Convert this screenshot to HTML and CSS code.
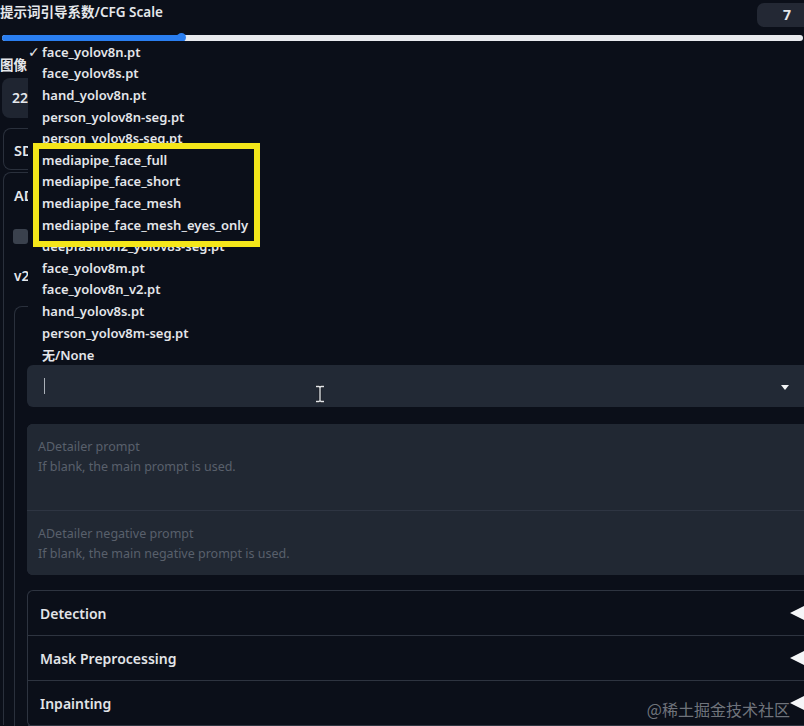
FILE: index.html
```html
<!DOCTYPE html>
<html lang="zh-CN">
<head>
    <meta charset="UTF-8">
    <meta name="viewport" content="width=device-width, initial-scale=1.0">
    <title>ADetailer</title>
    <link rel="stylesheet" href="styles.css">
</head>
<body>
    <div class="page">
        <!-- CFG scale slider -->
        <div class="cfg">
            <div class="cfg-head">
                <span class="label">提示词引导系数/CFG Scale</span>
                <div class="num-box">7</div>
            </div>
            <div class="slider">
                <div class="fill"></div>
                <div class="thumb"></div>
            </div>
        </div>

        <div class="size">
            <div class="label">图像</div>
            <div class="num-input">22</div>
        </div>

        <div class="block sd">
            <div class="block-title">SD</div>
        </div>

        <div class="block ad">
            <div class="block-title">AD</div>
            <div class="check"><span class="box"></span></div>
            <div class="ver">v2</div>

            <div class="inner">
                <div class="select">
                    <span class="caret"></span>
                    <span class="arrow"></span>
                </div>

                <div class="prompts">
                    <div class="prompt tall">
                        <p>ADetailer prompt</p>
                        <p>If blank, the main prompt is used.</p>
                    </div>
                    <div class="prompt">
                        <p>ADetailer negative prompt</p>
                        <p>If blank, the main negative prompt is used.</p>
                    </div>
                </div>

                <div class="accordions">
                    <div class="acc-row"><span>Detection</span><span class="tri"></span></div>
                    <div class="acc-row"><span>Mask Preprocessing</span><span class="tri"></span></div>
                    <div class="acc-row"><span>Inpainting</span><span class="tri"></span></div>
                </div>
            </div>
        </div>

        <!-- Open dropdown menu -->
        <ul class="menu">
            <li><span class="tick">✓</span>face_yolov8n.pt</li>
            <li><span class="tick"></span>face_yolov8s.pt</li>
            <li><span class="tick"></span>hand_yolov8n.pt</li>
            <li><span class="tick"></span>person_yolov8n-seg.pt</li>
            <li><span class="tick"></span>person_yolov8s-seg.pt</li>
            <li><span class="tick"></span>mediapipe_face_full</li>
            <li><span class="tick"></span>mediapipe_face_short</li>
            <li><span class="tick"></span>mediapipe_face_mesh</li>
            <li><span class="tick"></span>mediapipe_face_mesh_eyes_only</li>
            <li><span class="tick"></span>deepfashion2_yolov8s-seg.pt</li>
            <li><span class="tick"></span>face_yolov8m.pt</li>
            <li><span class="tick"></span>face_yolov8n_v2.pt</li>
            <li><span class="tick"></span>hand_yolov8s.pt</li>
            <li><span class="tick"></span>person_yolov8m-seg.pt</li>
            <li><span class="tick"></span>无/None</li>
        </ul>

        <div class="highlight"></div>

        <svg class="ibeam" width="10" height="18" viewBox="0 0 10 18">
            <path d="M1 1.5h3l1 1 1-1h3M5 2.5v13M1 16.5h3l1-1 1 1h3" fill="none" stroke="#1a1d24" stroke-width="3"/>
            <path d="M1 1.5h3l1 1 1-1h3M5 2.5v13M1 16.5h3l1-1 1 1h3" fill="none" stroke="#e3e6ea" stroke-width="1.3"/>
        </svg>

        <div class="watermark">@稀土掘金技术社区</div>
    </div>
</body>
</html>
```

FILE: styles.css
```css
/* General */
html, body {
    margin: 0;
    padding: 0;
    background: #0b0f19;
    overflow: hidden;
}

body {
    font-family: 'Noto Sans', 'Noto Sans CJK SC', sans-serif;
    color: #e5e7eb;
    width: 804px;
    height: 726px;
}

.page {
    position: relative;
    width: 812px;
    height: 726px;
    overflow: hidden;
}

.label {
    font-size: 13.5px;
    font-weight: 600;
    line-height: 20px;
    color: #e5e7eb;
}

/* CFG slider */
.cfg {
    padding-top: 2px;
}

.cfg-head {
    display: flex;
    justify-content: space-between;
    align-items: flex-start;
    height: 26px;
}

.num-box {
    margin-top: 1px;
    width: 34px;
    height: 24px;
    padding-right: 21px;
    border-radius: 7px;
    background: #232834;
    font-size: 14px;
    font-weight: 700;
    line-height: 24px;
    text-align: right;
}

.slider {
    position: relative;
    margin: 7px 9px 0 2px;
    height: 6px;
    border-radius: 3px;
    background: #e8eaee;
}

.slider .fill {
    width: 180px;
    height: 100%;
    border-radius: 3px;
    background: #2a7ef0;
}

.slider .thumb {
    position: absolute;
    left: 175px;
    top: -2px;
    width: 9px;
    height: 9px;
    border-radius: 50%;
    background: #2a7ef0;
}

/* Width input */
.size {
    margin-top: 14px;
}

.num-input {
    margin: 3px 0 0 2px;
    width: 200px;
    height: 40px;
    padding-left: 10px;
    box-sizing: border-box;
    border-radius: 8px;
    background: #1f2531;
    font-size: 14px;
    font-weight: 600;
    line-height: 40px;
}

/* Blocks */
.block {
    margin-left: 3px;
    border: 1px solid #2a303c;
    border-right: none;
    border-radius: 8px 0 0 8px;
    padding-left: 10px;
}

.block-title {
    font-size: 14.5px;
    font-weight: 600;
    line-height: 20px;
}

.sd {
    margin-top: 10px;
    padding-top: 11px;
    padding-bottom: 9px;
}

.ad {
    margin-top: 2px;
    padding-top: 12px;
    border-bottom: none;
    border-radius: 8px 0 0 0;
    height: 540px;
}

.check {
    margin-top: 24px;
    height: 15px;
}

.check .box {
    display: block;
    width: 15px;
    height: 15px;
    margin-left: -1px;
    border-radius: 3px;
    background: #3a414d;
}

.ver {
    margin-top: 22px;
    font-size: 13.5px;
    font-weight: 600;
    line-height: 20px;
}

.inner {
    margin-top: 20px;
    border: 1px solid #2a303c;
    border-right: none;
    border-bottom: none;
    border-radius: 8px 0 0 0;
    padding: 58px 0 0 12px;
    height: 420px;
}

/* Select input */
.select {
    position: relative;
    height: 42px;
    border-radius: 6px;
    background: #222935;
}

.select .caret {
    position: absolute;
    left: 17px;
    top: 13px;
    width: 1px;
    height: 16px;
    background: #aab0b8;
}

.select .arrow {
    position: absolute;
    right: 23px;
    top: 20px;
    border-left: 4px solid transparent;
    border-right: 4px solid transparent;
    border-top: 5px solid #f3f4f6;
}

/* Prompts */
.prompts {
    margin-top: 17px;
    display: flex;
    flex-direction: column;
    gap: 1px;
    background: #2e3542;
    border-radius: 6px;
    overflow: hidden;
}

.prompt {
    height: 64px;
    padding: 13px 11px 0;
    box-sizing: border-box;
    background: #212833;
    font-size: 12.5px;
    line-height: 20px;
    color: #59606c;
}

.prompt.tall {
    height: 86px;
}

.prompt p {
    margin: 0;
}

/* Accordions */
.accordions {
    margin-top: 15px;
    border: 1px solid #2e3440;
    border-right: none;
    border-radius: 6px 0 0 6px;
}

.acc-row {
    display: flex;
    justify-content: space-between;
    align-items: center;
    height: 44px;
    padding: 0 8px 0 12px;
    border-bottom: 1px solid #2e3440;
    font-size: 14px;
    font-weight: 600;
    color: #e2e4e8;
}

.tri {
    width: 0;
    height: 0;
    border-top: 7px solid transparent;
    border-bottom: 7px solid transparent;
    border-right: 14px solid #f5f6f8;
}

/* Dropdown menu */
.menu {
    position: absolute;
    top: 41px;
    left: 28px;
    right: 0;
    height: 323px;
    margin: 0;
    padding: 0;
    list-style: none;
    background: #0b0f19;
    z-index: 5;
}

.menu li {
    display: flex;
    align-items: center;
    height: 21.6px;
    font-size: 13px;
    font-weight: 600;
    color: #e4e6ea;
}

.menu .tick {
    width: 14px;
    font-family: 'DejaVu Sans', sans-serif;
    font-size: 14px;
    font-weight: 700;
}

.highlight {
    position: absolute;
    left: 33px;
    top: 143px;
    width: 215px;
    height: 92px;
    border: 6px solid #f4e61a;
    z-index: 6;
}

.ibeam {
    position: absolute;
    left: 315px;
    top: 385px;
    z-index: 7;
}

.watermark {
    position: absolute;
    right: 22px;
    bottom: 5px;
    font-family: 'Noto Sans CJK SC', sans-serif;
    font-size: 16px;
    color: rgba(200, 204, 210, 0.55);
    z-index: 7;
}
```
